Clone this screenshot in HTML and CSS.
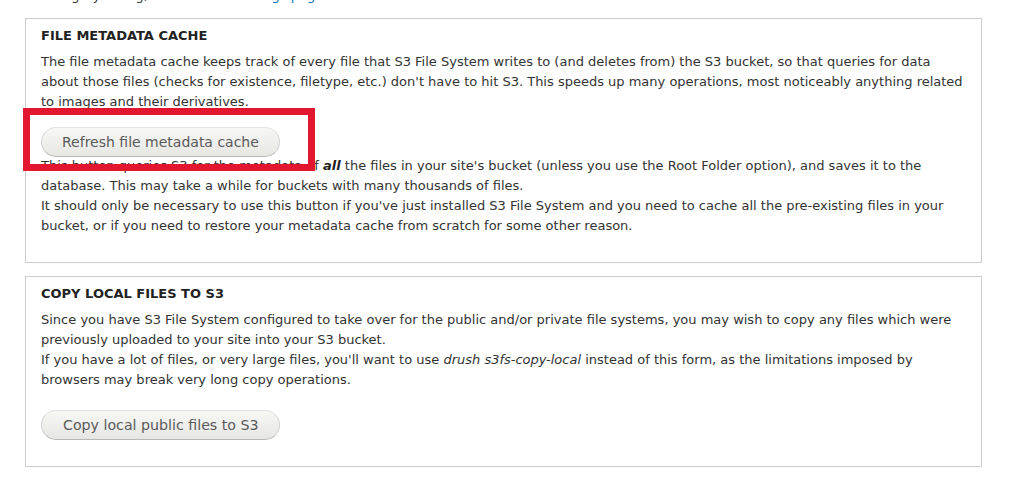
FILE: index.html
```html
<!DOCTYPE html>
<html>
<head>
<meta charset="utf-8">
<link rel="stylesheet" href="styles.css">
</head>
<body>
<div class="page">
  <p class="intro">Category listing, see also the <a href="#">settings page</a></p>

  <div class="fieldset">
    <h2 class="legend">File metadata cache</h2>
    <p class="text">The file metadata cache keeps track of every file that S3 File System writes to (and deletes from) the S3 bucket, so that queries for data about those files (checks for existence, filetype, etc.) don't have to hit S3. This speeds up many operations, most noticeably anything related to images and their derivatives.</p>
    <div class="action first-action">
      <button class="btn">Refresh file metadata cache</button>
      <span class="highlight"></span>
    </div>
    <p class="text">This button queries S3 for the metadata of <em>all</em> the files in your site's bucket (unless you use the Root Folder option), and saves it to the database. This may take a while for buckets with many thousands of files.<br>It should only be necessary to use this button if you've just installed S3 File System and you need to cache all the pre-existing files in your bucket, or if you need to restore your metadata cache from scratch for some other reason.</p>
  </div>

  <div class="fieldset second">
    <h2 class="legend">Copy local files to S3</h2>
    <p class="text">Since you have S3 File System configured to take over for the public and/or private file systems, you may wish to copy any files which were previously uploaded to your site into your S3 bucket.<br>If you have a lot of files, or very large files, you'll want to use <i>drush s3fs-copy-local</i> instead of this form, as the limitations imposed by browsers may break very long copy operations.</p>
    <div class="action second-action">
      <button class="btn btn-wide">Copy local public files to S3</button>
    </div>
  </div>
</div>
</body>
</html>
```

FILE: styles.css
```css
html, body {
  margin: 0;
  padding: 0;
  background: #fff;
}
body {
  font-family: "DejaVu Sans", sans-serif;
  font-size: 13px;
  line-height: 20px;
  color: #333;
}
.page {
  padding-left: 25px;
  width: 957px;
}
.intro {
  margin: -14px 0 12px 16px;
  color: #333;
}
.intro a {
  color: #0074bd;
  text-decoration: none;
}
.fieldset {
  border: 1px solid #ccc;
  padding: 7px 15px 26px 15px;
}
.fieldset.second {
  margin-top: 13px;
  padding-bottom: 26px;
}
.legend {
  margin: 0 0 6px 0;
  font-size: 13px;
  line-height: 20px;
  font-weight: bold;
  text-transform: uppercase;
  color: #222;
}
.text {
  margin: 0;
  color: #333;
}
.text em {
  font-weight: bold;
  font-style: italic;
  color: #222;
}
.action {
  position: relative;
}
.first-action {
  margin-top: 15px;
  height: 29px;
}
.second-action {
  margin-top: 20px;
}
.btn {
  display: inline-block;
  height: 30px;
  padding: 0 20px;
  font-family: "DejaVu Sans", sans-serif;
  font-size: 14px;
  color: #5a5a5a;
  background: linear-gradient(#f7f7f5, #e6e6e3);
  border: 1px solid #d2d2d2;
  border-top-color: #e2e2e2;
  border-bottom-color: #b8b8b8;
  border-radius: 20px;
  cursor: pointer;
}
.btn-wide {
  padding: 0 20px 0 21px;
  font-size: 14.2px;
}
.highlight {
  position: absolute;
  left: -18px;
  top: -19px;
  width: 278px;
  height: 49px;
  border: 7px solid #e2172f;
  pointer-events: none;
}
```
